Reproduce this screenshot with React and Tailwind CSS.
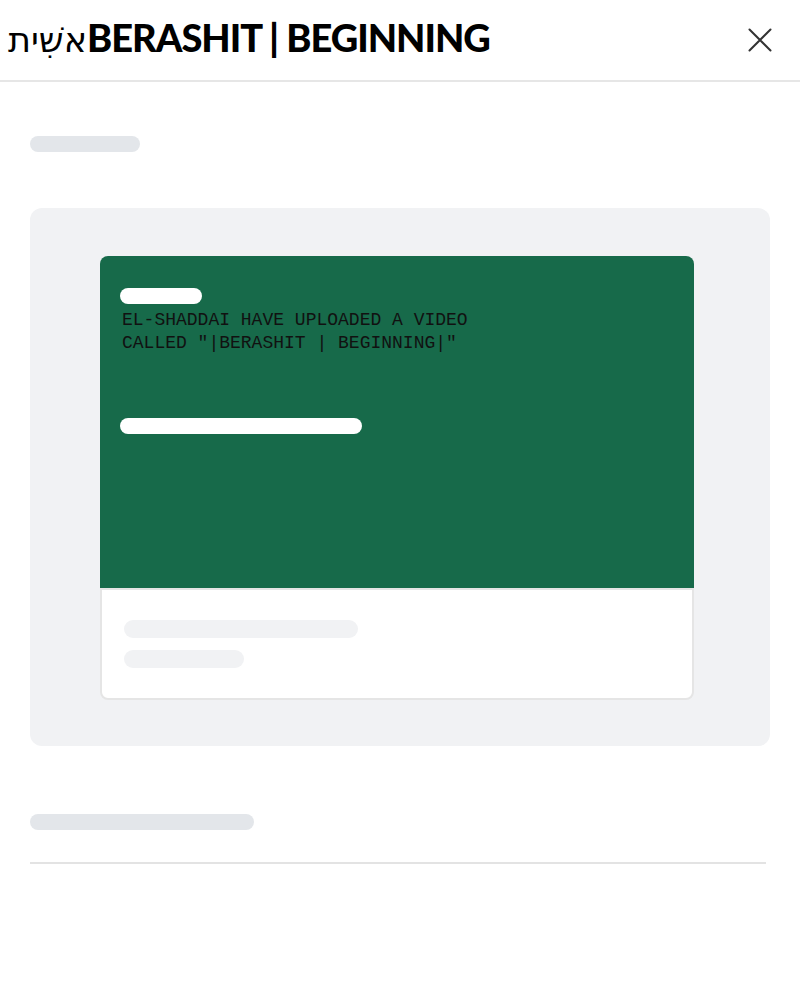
import React from 'react';

const Bar = ({ className }) => <div className={`rounded-full ${className}`}></div>;

const App = () => {
  return (
    <div className="min-h-[998px] bg-white font-['Lato',sans-serif]">
      {/* Header */}
      <header className="h-[82px] border-b-2 border-[#e6e6e6] flex items-center justify-between pl-[8px] pr-[28px]">
        <h1 className="text-[38px] font-black leading-none text-black whitespace-nowrap tracking-[-1px] pb-[4px]">
          <span className="font-normal tracking-normal font-['DejaVu_Sans',sans-serif] text-[35px]">אשִׁית</span>BERASHIT | BEGINNING
        </h1>
        <button className="w-6 h-6 flex items-center justify-center">
          <svg width="24" height="24" viewBox="0 0 24 24" fill="none" stroke="#333" strokeWidth="2" strokeLinecap="round">
            <path d="M1.5 1.5L22.5 22.5M22.5 1.5L1.5 22.5" />
          </svg>
        </button>
      </header>

      <main className="px-[30px]">
        <Bar className="mt-[54px] w-[110px] h-4 bg-[#e3e6ea]" />

        {/* Preview panel */}
        <div className="mt-[56px] bg-[#f1f2f4] rounded-xl pl-[70px] pt-[48px] pb-[46px]">
          <div className="w-[594px]">
            <div className="h-[332px] bg-[#176a4a] rounded-t-lg px-5 pt-8">
              <Bar className="w-[82px] h-4 bg-white" />
              <p className="mt-[5px] pl-[2px] font-['Liberation_Mono',monospace] text-[18px] leading-[23px] text-[#111] uppercase w-[360px]">
                El-Shaddai have uploaded a video called "|Berashit | Beginning|"
              </p>
              <Bar className="mt-[63px] w-[242px] h-4 bg-white" />
            </div>
            <div className="border-2 border-[#e5e5e5] rounded-b-lg bg-white px-[22px] py-[30px] flex flex-col gap-3">
              <Bar className="w-[234px] h-[18px] bg-[#f1f2f4]" />
              <Bar className="w-[120px] h-[18px] bg-[#f1f2f4]" />
            </div>
          </div>
        </div>

        <Bar className="mt-[68px] w-[224px] h-4 bg-[#e3e6ea]" />
        <div className="mt-8 w-[736px] h-[2px] bg-[#e3e3e3]"></div>
      </main>
    </div>
  );
};

export default App;
